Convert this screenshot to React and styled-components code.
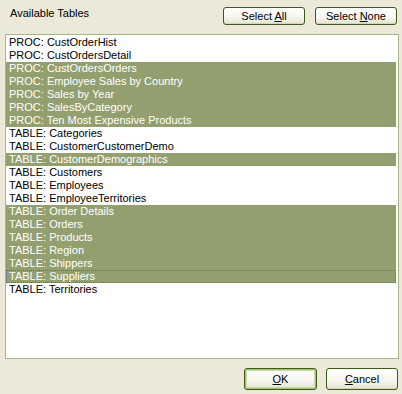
import React from 'react'
import styled, { createGlobalStyle } from 'styled-components'

const GlobalStyle = createGlobalStyle`
  html, body {
    margin: 0;
    padding: 0;
    background: #ece9d8;
  }
  body {
    font-family: Tahoma, "Liberation Sans", Arial, sans-serif;
    font-size: 11px;
  }
`

const tables = [
  { text: 'PROC: CustOrderHist' },
  { text: 'PROC: CustOrdersDetail' },
  { text: 'PROC: CustOrdersOrders', selected: true },
  { text: 'PROC: Employee Sales by Country', selected: true },
  { text: 'PROC: Sales by Year', selected: true },
  { text: 'PROC: SalesByCategory', selected: true },
  { text: 'PROC: Ten Most Expensive Products', selected: true },
  { text: 'TABLE: Categories' },
  { text: 'TABLE: CustomerCustomerDemo' },
  { text: 'TABLE: CustomerDemographics', selected: true },
  { text: 'TABLE: Customers' },
  { text: 'TABLE: Employees' },
  { text: 'TABLE: EmployeeTerritories' },
  { text: 'TABLE: Order Details', selected: true },
  { text: 'TABLE: Orders', selected: true },
  { text: 'TABLE: Products', selected: true },
  { text: 'TABLE: Region', selected: true },
  { text: 'TABLE: Shippers', selected: true },
  { text: 'TABLE: Suppliers', selected: true, focused: true },
  { text: 'TABLE: Territories' },
]

const Dialog = styled.div`
  width: 402px;
  height: 394px;
  display: flex;
  flex-direction: column;
  box-sizing: border-box;
  padding: 7px 3px 4px 5px;
`

const Header = styled.div`
  display: flex;
  align-items: flex-start;
  height: 18px;
  margin-bottom: 9px;
`

const Caption = styled.div`
  flex: 1;
  padding: 0 0 0 5px;
  line-height: 13px;
  color: #000;
`

const ButtonGroup = styled.div`
  display: flex;
  gap: 10px;
  margin-right: 2px;
`

const Button = styled.button`
  box-sizing: border-box;
  width: ${p => p.$w || 82}px;
  height: ${p => p.$h || 18}px;
  padding: 0;
  font: inherit;
  color: #000;
  border: 1px solid #3d5a1b;
  border-radius: 3px;
  background: linear-gradient(#ffffff 0%, #f6f5ee 60%, #e4e2d2 100%);
  box-shadow: ${p => p.$default
    ? 'inset 0 0 0 1px #a7c07a, inset 0 0 0 2px #c9d9a8'
    : 'inset 0 -1px 0 #d6d3bf'};
  cursor: default;

  u {
    text-decoration: underline;
    text-underline-offset: 1px;
  }
`

const ListBox = styled.div`
  flex: 1;
  background: #fff;
  border: 1px solid #a5b97f;
  padding: 1px 2px 1px 0;
  overflow: hidden;
`

const Row = styled.div`
  height: 13px;
  line-height: 13px;
  padding-left: 3px;
  white-space: nowrap;
  box-sizing: border-box;
  color: ${p => (p.$selected ? '#fff' : '#000')};
  background: ${p => (p.$selected ? '#949f6f' : 'transparent')};
  outline: ${p => (p.$focused ? '1px dotted #5a5fd0' : 'none')};
  outline-offset: -1px;
`

const Footer = styled.div`
  display: flex;
  justify-content: flex-end;
  gap: 9px;
  padding: 9px 1px 0 0;
`

export default function App() {
  return (
    <>
      <GlobalStyle />
      <Dialog>
        <Header>
          <Caption>Available Tables</Caption>
          <ButtonGroup>
            <Button>Select <u>A</u>ll</Button>
            <Button>Select <u>N</u>one</Button>
          </ButtonGroup>
        </Header>
        <ListBox>
          {tables.map(t => (
            <Row key={t.text} $selected={t.selected} $focused={t.focused}>
              {t.text}
            </Row>
          ))}
        </ListBox>
        <Footer>
          <Button $w={73} $h={22} $default><u>O</u>K</Button>
          <Button $w={72} $h={22}><u>C</u>ancel</Button>
        </Footer>
      </Dialog>
    </>
  )
}
